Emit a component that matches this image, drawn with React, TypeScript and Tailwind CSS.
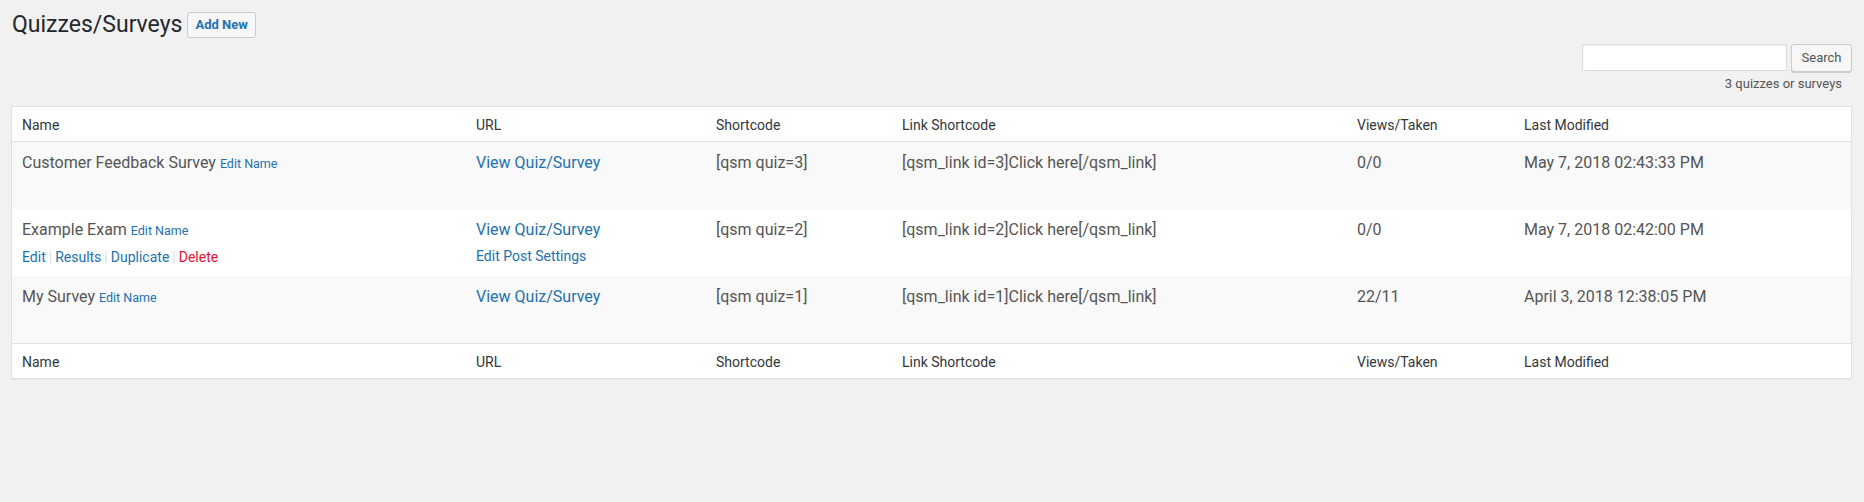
import React from 'react';

interface Quiz {
  id: number;
  name: string;
  views: string;
  modified: string;
  showActions?: boolean;
}

const quizzes: Quiz[] = [
  { id: 3, name: 'Customer Feedback Survey', views: '0/0', modified: 'May 7, 2018 02:43:33 PM' },
  { id: 2, name: 'Example Exam', views: '0/0', modified: 'May 7, 2018 02:42:00 PM', showActions: true },
  { id: 1, name: 'My Survey', views: '22/11', modified: 'April 3, 2018 12:38:05 PM' },
];

const cols = 'grid grid-cols-[454px_240px_186px_455px_167px_1fr]';

const HeadRow: React.FC<{ top?: boolean }> = ({ top }) => (
  <div
    className={`${cols} h-[35px] text-[14px] leading-[20px] text-[#32373c] ${
      top ? 'border-b border-[#e1e1e1]' : 'border-t border-[#e1e1e1]'
    }`}
  >
    {['Name', 'URL', 'Shortcode', 'Link Shortcode', 'Views/Taken', 'Last Modified'].map((h) => (
      <div key={h} className="px-[10px] pt-[8px]">
        {h}
      </div>
    ))}
  </div>
);

const Sep = () => <span className="mx-[3px] text-[#ddd]">|</span>;

const QuizRow: React.FC<{ quiz: Quiz; odd: boolean }> = ({ quiz, odd }) => (
  <div className={`${cols} h-[67px] text-[16px] leading-[24px] text-[#555] ${odd ? 'bg-[#f9f9f9]' : 'bg-white'}`}>
    <div className="px-[10px] pt-[9px]">
      <div>
        {quiz.name} <span className="text-[12.5px] text-[#2271b1]">Edit Name</span>
      </div>
      <div className={`mt-[4px] text-[14px] leading-[20px] text-[#2271b1] ${quiz.showActions ? '' : 'invisible'}`}>
        <span>Edit</span>
        <Sep />
        <span>Results</span>
        <Sep />
        <span>Duplicate</span>
        <Sep />
        <span className="text-[#e5132e]">Delete</span>
      </div>
    </div>
    <div className="px-[10px] pt-[9px]">
      <div className="text-[#2271b1]">View Quiz/Survey</div>
      {quiz.showActions && (
        <div className="mt-[4px] text-[14px] leading-[20px] text-[#2271b1]">Edit Post Settings</div>
      )}
    </div>
    <div className="px-[10px] pt-[9px]">[qsm quiz={quiz.id}]</div>
    <div className="px-[10px] pt-[9px]">[qsm_link id={quiz.id}]Click here[/qsm_link]</div>
    <div className="px-[10px] pt-[9px]">{quiz.views}</div>
    <div className="px-[10px] pt-[9px]">{quiz.modified}</div>
  </div>
);

const App: React.FC = () => {
  return (
    <div className="min-h-[502px] bg-[#f1f1f1] font-['Roboto',sans-serif] text-[#444]">
      <div className="pl-[11px] pr-[12px] pt-[10px]">
        <div className="ml-px flex items-center gap-[5px]">
          <h1 className="text-[23px] font-normal leading-[30px] text-[#23282d]">Quizzes/Surveys</h1>
          <button className="h-[26px] rounded-[3px] border border-[#ccc] bg-[#f7f7f7] px-[7px] text-[13px] font-bold text-[#2271b1]">
            Add New
          </button>
        </div>

        <div className="mt-[4px] flex flex-col items-end">
          <div className="flex gap-[4px]">
            <input
              type="text"
              className="h-[27px] w-[205px] border border-[#ddd] bg-white shadow-[inset_0_1px_2px_rgba(0,0,0,0.07)]"
            />
            <button className="h-[28px] w-[61px] rounded-[3px] border border-[#ccc] bg-[#f7f7f7] text-[13px] text-[#555] shadow-[0_1px_0_#ccc]">
              Search
            </button>
          </div>
          <div className="mr-[10px] mt-[3px] text-[13px] leading-[18px] text-[#555]">3 quizzes or surveys</div>
        </div>

        <div className="mt-[13px] border border-[#e1e1e1] bg-white shadow-[0_1px_1px_rgba(0,0,0,0.04)]">
          <HeadRow top />
          {quizzes.map((q, i) => (
            <QuizRow key={q.id} quiz={q} odd={i % 2 === 0} />
          ))}
          <HeadRow />
        </div>
      </div>
    </div>
  );
};

export default App;
